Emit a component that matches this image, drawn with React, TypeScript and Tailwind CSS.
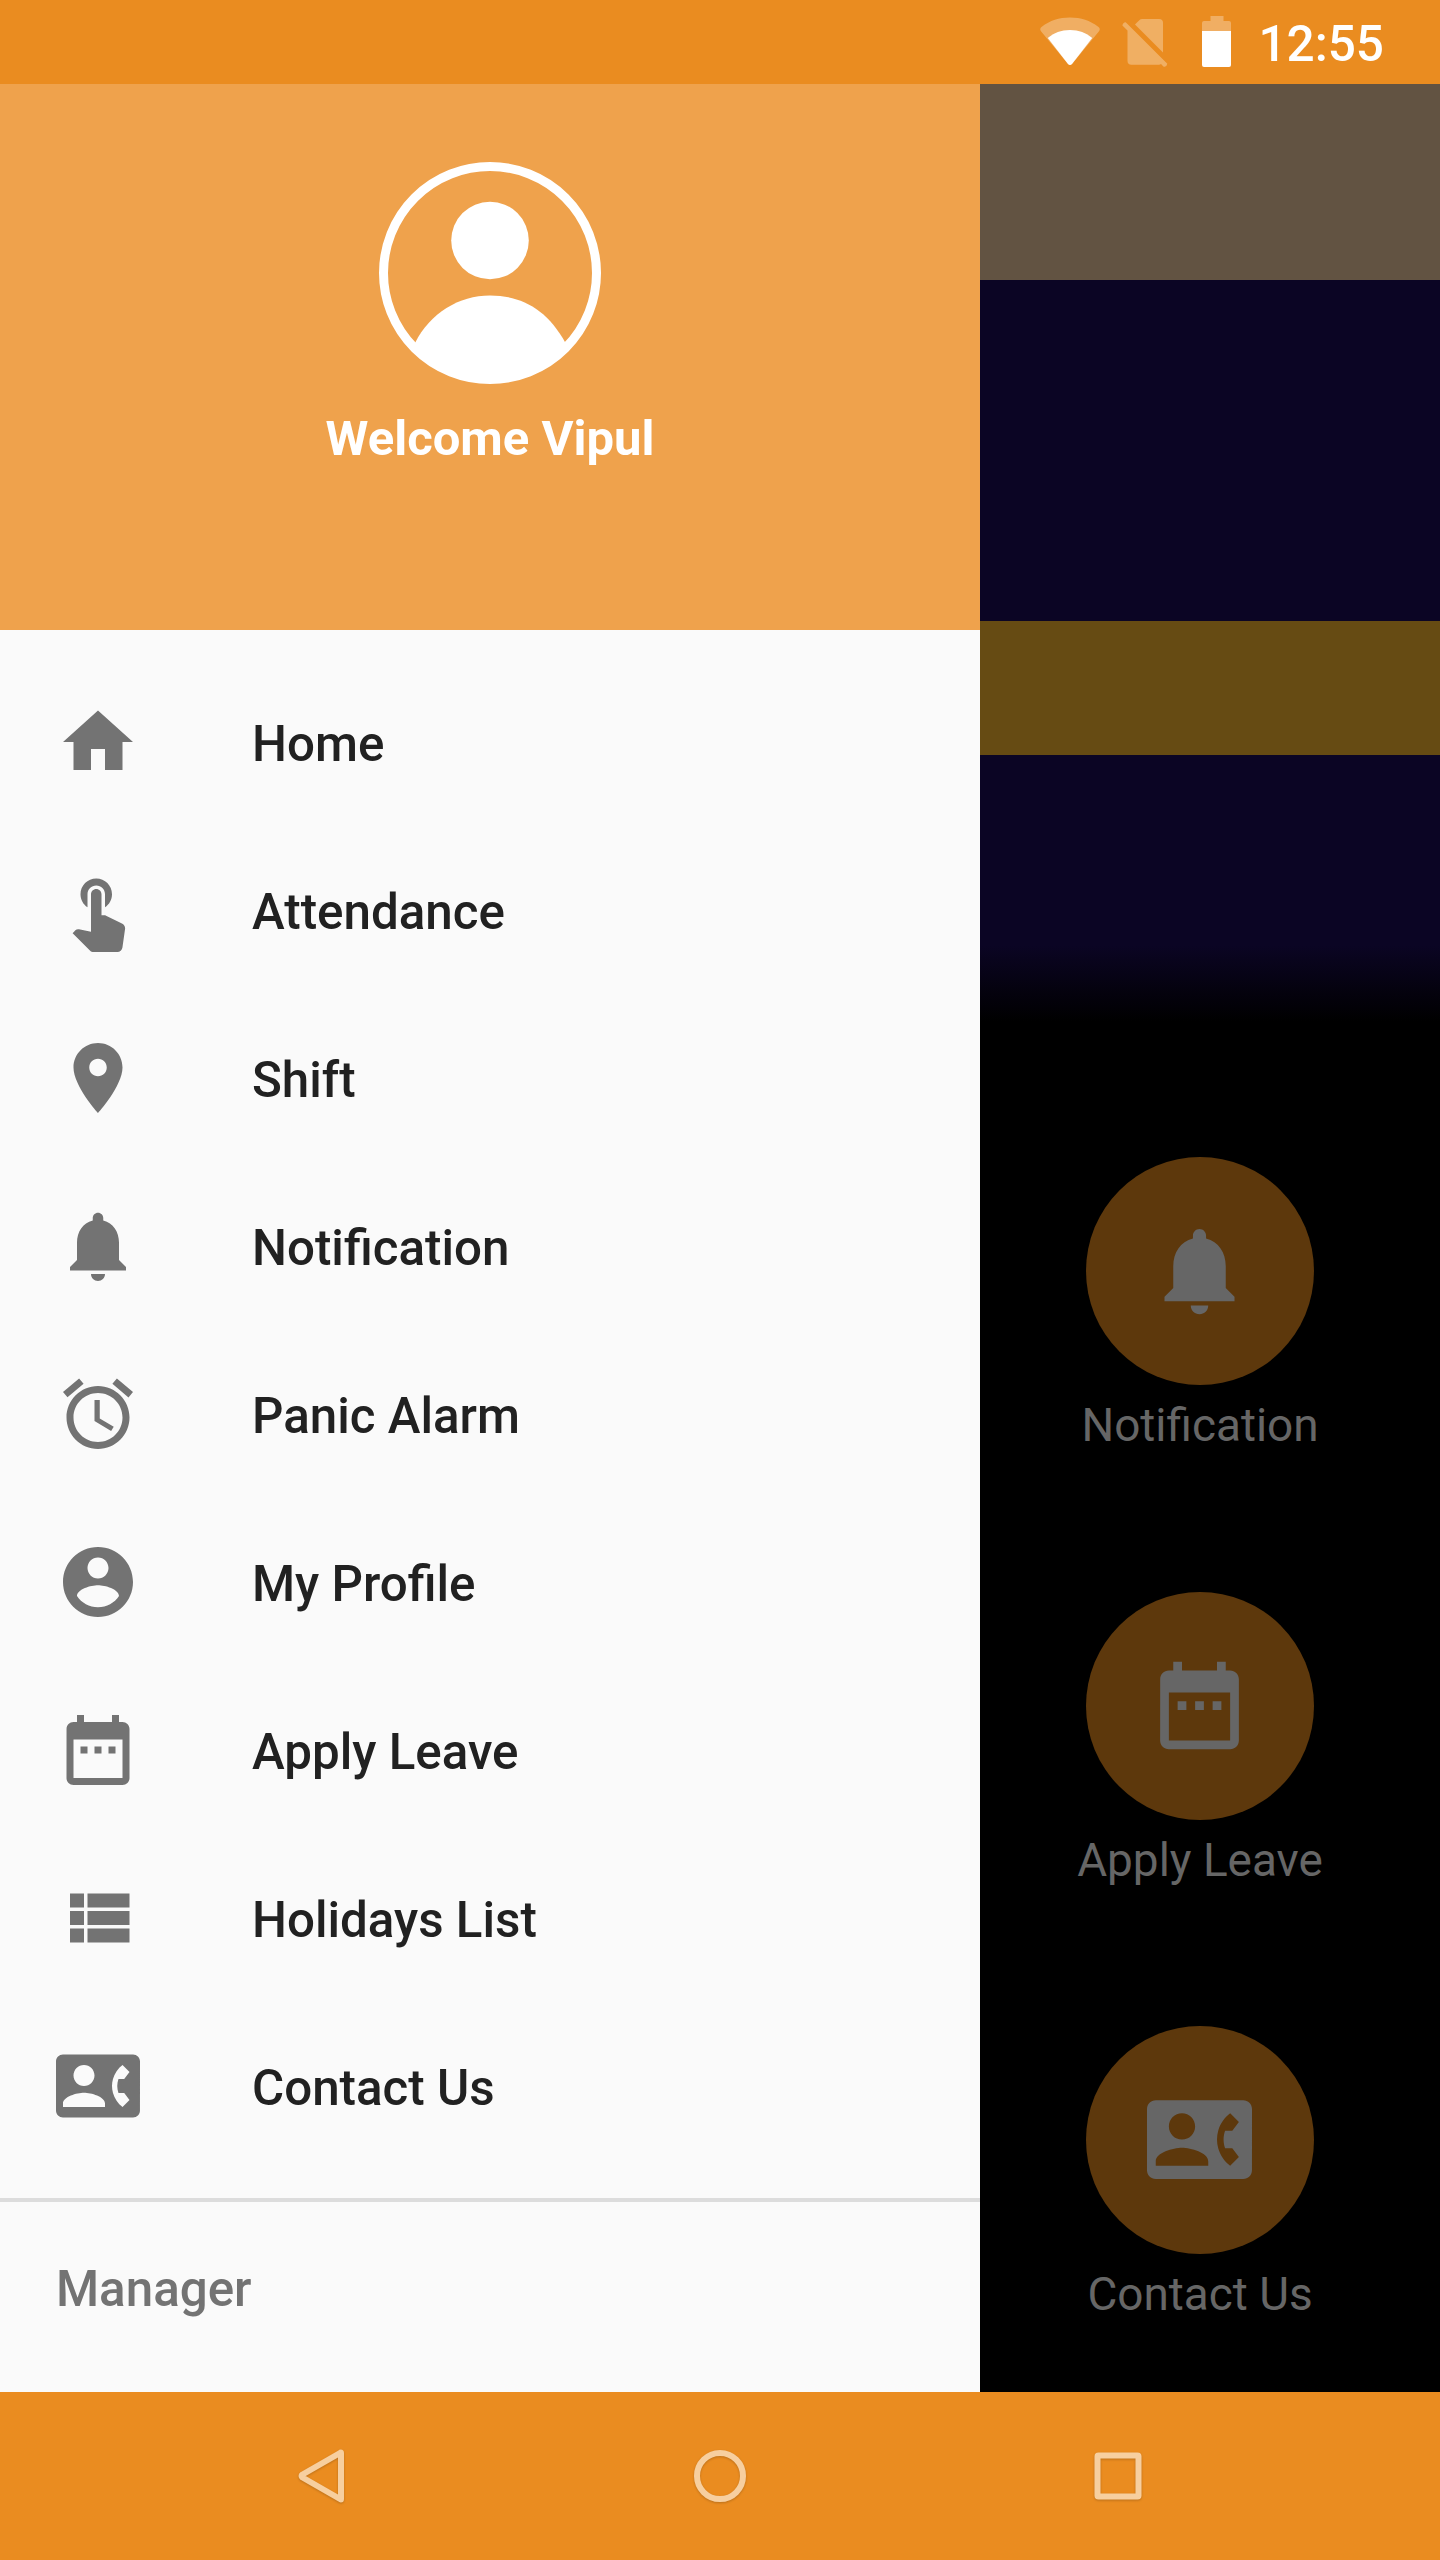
const icons = {
  home: "M10 20v-6h4v6h5v-8h3L12 3 2 12h3v8z",
  touch:
    "M9 11.24V7.5C9 6.12 10.12 5 11.5 5S14 6.12 14 7.5v3.74c1.21-.81 2-2.18 2-3.74C16 5.01 13.99 3 11.5 3S7 5.01 7 7.5c0 1.56.79 2.93 2 3.74zm9.84 4.63l-4.54-2.26c-.17-.07-.35-.11-.54-.11H13v-6c0-.83-.67-1.5-1.5-1.5S10 6.67 10 7.5v10.74l-3.43-.72c-.08-.01-.15-.03-.24-.03-.31 0-.59.13-.79.33l-.79.8 4.94 4.94c.27.27.65.44 1.06.44h6.79c.75 0 1.33-.55 1.44-1.28l.75-5.27c.01-.07.02-.14.02-.2 0-.62-.38-1.16-.91-1.38z",
  place:
    "M12 2C8.13 2 5 5.13 5 9c0 5.25 7 13 7 13s7-7.75 7-13c0-3.87-3.13-7-7-7zm0 9.5c-1.38 0-2.5-1.12-2.5-2.5s1.12-2.5 2.5-2.5 2.5 1.12 2.5 2.5-1.12 2.5-2.5 2.5z",
  bell: "M12 22c1.1 0 2-.9 2-2h-4c0 1.1.89 2 2 2zm6-6v-5c0-3.07-1.64-5.64-4.5-6.32V4c0-.83-.67-1.5-1.5-1.5s-1.5.67-1.5 1.5v.68C7.63 5.36 6 7.92 6 11v5l-2 2v1h16v-1l-2-2z",
  alarm:
    "M22 5.72l-4.6-3.86-1.29 1.53 4.6 3.86L22 5.72zM7.88 3.39L6.6 1.86 2 5.71l1.29 1.53 4.59-3.85zM12.5 8H11v6l4.75 2.85.75-1.23-4-2.37V8zM12 4c-4.97 0-9 4.03-9 9s4.02 9 9 9c4.97 0 9-4.03 9-9s-4.03-9-9-9zm0 16c-3.87 0-7-3.13-7-7s3.13-7 7-7 7 3.13 7 7-3.13 7-7 7z",
  account:
    "M12 2C6.48 2 2 6.48 2 12s4.48 10 10 10 10-4.48 10-10S17.52 2 12 2zm0 3c1.66 0 3 1.34 3 3s-1.34 3-3 3-3-1.34-3-3 1.34-3 3-3zm0 14.2c-2.5 0-4.71-1.28-6-3.22.03-1.99 4-3.08 6-3.08 1.99 0 5.97 1.09 6 3.08-1.29 1.94-3.5 3.22-6 3.22z",
  calendar:
    "M9 11H7v2h2v-2zm4 0h-2v2h2v-2zm4 0h-2v2h2v-2zm2-7h-1V2h-2v2H8V2H6v2H5c-1.11 0-1.99.9-1.99 2L3 20c0 1.1.89 2 2 2h14c1.1 0 2-.9 2-2V6c0-1.1-.9-2-2-2zm0 16H5V9h14v11z",
  list: "M4 14h4v-4H4v4zm0 5h4v-4H4v4zM4 9h4V5H4v4zm5 5h12v-4H9v4zm0 5h12v-4H9v4zM9 5v4h12V5H9z",
  contact:
    "M22 3H2C.9 3 0 3.9 0 5v14c0 1.1.9 2 2 2h20c1.1 0 1.99-.9 1.99-2L24 5c0-1.1-.9-2-2-2zM8 6c1.66 0 3 1.34 3 3s-1.34 3-3 3-3-1.34-3-3 1.34-3 3-3zm6 12H2v-1c0-2 4-3.1 6-3.1s6 1.1 6 3.1v1zm3.85-4h1.64L21 16l-1.99 1.99c-1.31-.98-2.28-2.38-2.73-3.99-.18-.64-.28-1.31-.28-2s.1-1.36.28-2c.45-1.62 1.42-3.01 2.73-3.99L21 8l-1.51 2h-1.64c-.22.63-.35 1.3-.35 2s.13 1.37.35 2z",
};

type IconName = keyof typeof icons;

const menuItems: { icon: IconName; label: string }[] = [
  { icon: "home", label: "Home" },
  { icon: "touch", label: "Attendance" },
  { icon: "place", label: "Shift" },
  { icon: "bell", label: "Notification" },
  { icon: "alarm", label: "Panic Alarm" },
  { icon: "account", label: "My Profile" },
  { icon: "calendar", label: "Apply Leave" },
  { icon: "list", label: "Holidays List" },
  { icon: "contact", label: "Contact Us" },
];

const shortcuts: { icon: IconName; label: string }[] = [
  { icon: "bell", label: "Notification" },
  { icon: "calendar", label: "Apply Leave" },
  { icon: "contact", label: "Contact Us" },
];

function Icon({ name, className }: { name: IconName; className: string }) {
  return (
    <svg viewBox="0 0 24 24" fill="currentColor" className={className}>
      <path d={icons[name]} />
    </svg>
  );
}

function StatusBar() {
  return (
    <header className="flex h-[84px] shrink-0 items-center justify-end bg-[#ea8c20] pr-[56px] text-white">
      <svg width="62" height="84" viewBox="0 0 62 84" fill="currentColor">
        <path
          opacity="0.3"
          d="M2.2 31.5Q0 29 2.8 26.8C11 20.500 20 17.500 31 17.500S51 20.500 59.200 26.800Q62 29 59.800 31.500L33.200 63.800Q31 66.200 28.800 63.800Z"
        />
        <path d="M8.800 38C15 32.800 22 30 31 30S47 32.800 53.200 38L33.200 63.800Q31 66.200 28.800 63.800Z" />
      </svg>
      <svg
        width="46"
        height="84"
        viewBox="0 0 46 84"
        fill="currentColor"
        className="ml-[21px] opacity-30"
      >
        <path d="M13 24.500L17.300 20.200Q18.500 19 20.300 19H37Q41 19 41 23V52.500Z" />
        <path d="M3.700 22.200L45.300 63.800Q44.500 67.500 41.700 66.700L39 64Q38 64.700 37 64.700H9.500Q5.500 64.700 5.500 60.700V30.500L0.400 25.400Q0.800 22.500 3.700 22.200Z" />
      </svg>
      <svg
        width="30"
        height="84"
        viewBox="0 0 30 84"
        fill="currentColor"
        className="ml-[34px]"
      >
        <path
          opacity="0.3"
          d="M8.500 16h13v5h5.500q2 0 2 2v8H0v-8q0-2 2-2h6.500z"
        />
        <path d="M0 31h29v34q0 2-2 2H2q-2 0-2-2z" />
      </svg>
      <span className="ml-[26px] pt-[4px] text-[49.5px] leading-[80px] font-medium">
        12:55
      </span>
    </header>
  );
}

function Avatar() {
  return (
    <svg width="222" height="222" viewBox="0 0 222 222" fill="#fff">
      <circle
        cx="111"
        cy="111"
        r="106.500"
        fill="none"
        stroke="#fff"
        strokeWidth="9"
      />
      <circle cx="111" cy="78.500" r="38.800" />
      <path d="M36 181C51 151 80 133.500 111 133.500S168 147 186.500 181C168 205 140 218 111 218S54 205 36 181Z" />
    </svg>
  );
}

function Drawer() {
  return (
    <aside className="flex w-[980px] shrink-0 flex-col bg-[#fafafa]">
      <div className="flex h-[546px] flex-col items-center bg-[#efa24c] pt-[78px]">
        <Avatar />
        <p className="mt-[26px] text-[49px] leading-[58px] font-bold text-white">
          Welcome Vipul
        </p>
      </div>
      <nav className="py-[28px]">
        {menuItems.map((item) => (
          <a key={item.label} className="flex h-[168px] items-center pl-[56px]">
            <Icon name={item.icon} className="size-[84px] text-[#737373]" />
            <span className="ml-[112px] pt-[5px] text-[49.3px] font-medium text-[#212121]">
              {item.label}
            </span>
          </a>
        ))}
      </nav>
      <div className="border-t-4 border-[#dcdcdc] pt-[3px] pl-[56px]">
        <h2 className="text-[49.3px] leading-[168px] font-medium text-[#737373]">
          Manager
        </h2>
      </div>
    </aside>
  );
}

// Part of the dashboard that stays visible behind the open drawer
function Dashboard() {
  return (
    <main className="flex grow flex-col bg-black">
      <div className="h-[196px] bg-[#625342]" />
      <div className="h-[341px] bg-[#0b0524]" />
      <div className="h-[134px] bg-[#664b13]" />
      <div className="h-[190px] bg-[#0b0524]" />
      <div className="h-[77px] bg-linear-to-b/srgb from-[#0b0524] to-black" />
      <div className="flex flex-col gap-[140.5px] pt-[135px] pr-[20px]">
        {shortcuts.map((item) => (
          <div key={item.label} className="flex flex-col items-center">
            <div className="flex size-[228px] items-center justify-center rounded-full bg-[#5d380c] pr-px pb-px">
              <Icon name={item.icon} className="size-[105px] text-[#666666]" />
            </div>
            <span className="mt-[14px] text-[45.9px] leading-[52px] text-[#666666]">
              {item.label}
            </span>
          </div>
        ))}
      </div>
    </main>
  );
}

function NavigationBar() {
  return (
    <footer className="flex h-[168px] shrink-0 items-center justify-between bg-[#ea8c20] px-[282px]">
      <svg
        width="80"
        height="80"
        viewBox="0 0 80 80"
        strokeLinejoin="round"
        className="fill-none stroke-[#f7cf9f] stroke-6 drop-shadow-[0_1px_1px_rgba(0,0,0,0.2)]"
      >
        <path d="M59 17V63Q59 64 58 63L20.500 41.500Q18.500 40 20.500 38.500L58 17Q59 16 59 17Z" />
      </svg>
      <svg
        width="80"
        height="80"
        viewBox="0 0 80 80"
        className="fill-none stroke-[#f7cf9f] stroke-6 drop-shadow-[0_1px_1px_rgba(0,0,0,0.2)]"
      >
        <circle cx="40" cy="40" r="23" />
      </svg>
      <svg
        width="80"
        height="80"
        viewBox="0 0 80 80"
        className="fill-none stroke-[#f7cf9f] stroke-6 drop-shadow-[0_1px_1px_rgba(0,0,0,0.2)]"
      >
        <rect x="19.500" y="19.500" width="41" height="41" rx="1" />
      </svg>
    </footer>
  );
}

function App() {
  return (
    <div className="flex h-[2560px] w-[1440px] flex-col overflow-hidden font-['Roboto',sans-serif]">
      <StatusBar />
      <div className="flex h-[2308px] shrink-0">
        <Drawer />
        <Dashboard />
      </div>
      <NavigationBar />
    </div>
  );
}

export default App;
